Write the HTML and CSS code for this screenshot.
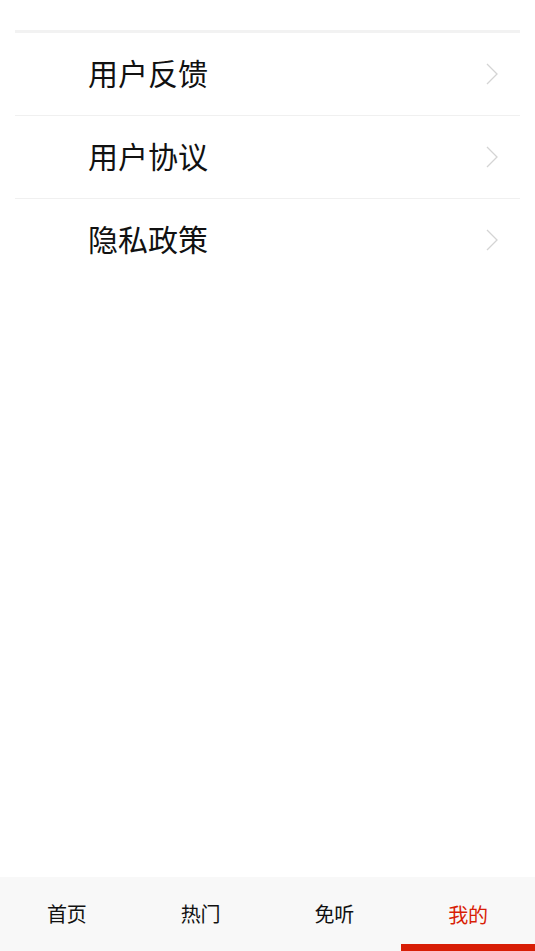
FILE: index.html
```html
<!DOCTYPE html>
<html lang="zh">
<head>
<meta charset="utf-8">
<link rel="stylesheet" href="styles.css">
</head>
<body>
<div class="page">
  <ul class="menu">
    <li class="item"><span class="label">用户反馈</span><svg class="chev" viewBox="0 0 12 22" width="12" height="22"><path d="M1 1 L11 11 L1 21" fill="none" stroke="#d4d4d4" stroke-width="1.3"/></svg></li>
    <li class="item"><span class="label">用户协议</span><svg class="chev" viewBox="0 0 12 22" width="12" height="22"><path d="M1 1 L11 11 L1 21" fill="none" stroke="#d4d4d4" stroke-width="1.3"/></svg></li>
    <li class="item"><span class="label">隐私政策</span><svg class="chev" viewBox="0 0 12 22" width="12" height="22"><path d="M1 1 L11 11 L1 21" fill="none" stroke="#d4d4d4" stroke-width="1.3"/></svg></li>
  </ul>
  <nav class="tabbar">
    <div class="tab">首页</div>
    <div class="tab">热门</div>
    <div class="tab">免听</div>
    <div class="tab active">我的</div>
  </nav>
</div>
</body>
</html>
```
FILE: styles.css
```css
html, body {
  margin: 0;
  padding: 0;
  background: #fff;
  font-family: "Noto Sans CJK SC", "Noto Sans", sans-serif;
}
.page {
  height: 951px;
  display: flex;
  flex-direction: column;
}
.menu {
  list-style: none;
  margin: 30px 15px 0 15px;
  padding: 0;
  border-top: 3px solid #f2f2f2;
  flex: 1;
}
.item {
  height: 82px;
  border-bottom: 1px solid #f0f0f0;
  display: flex;
  align-items: center;
  justify-content: space-between;
  padding: 0 22px 0 73px;
}
.item:last-child {
  border-bottom: none;
}
.label {
  font-size: 30px;
  color: #111;
  line-height: 1;
  margin-top: -5px;
}
.chev {
  display: block;
}
.tabbar {
  height: 74px;
  background: #f8f8f8;
  display: grid;
  grid-template-columns: repeat(4, 1fr);
}
.tab {
  display: flex;
  align-items: center;
  justify-content: center;
  font-size: 20px;
  color: #111;
  padding-bottom: 2px;
  box-sizing: border-box;
}
.tab.active {
  color: #d81e06;
  border-bottom: 7px solid #d81e06;
  padding-top: 7px;
  padding-bottom: 0;
}
```
